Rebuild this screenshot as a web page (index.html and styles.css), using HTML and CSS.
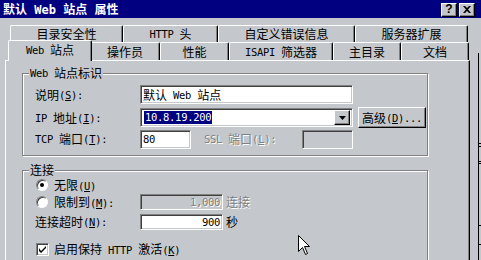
FILE: index.html
```html
<!DOCTYPE html>
<html lang="zh-CN">
<head>
  <meta charset="UTF-8" />
  <title>默认 Web 站点 属性</title>
  <link rel="stylesheet" href="styles.css">
</head>
<body>
  <div class="titlebar">
    <span class="title">默认<span class="en"> Web </span>站点<span class="en"> </span>属性</span>
    <div class="caption-btns">
      <span class="cbtn help">?</span>
      <span class="cbtn">
        <svg width="8" height="7" viewBox="0 0 8 7"><path d="M0 0h2l2 2 2-2h2L5 3.5 8 7H6L4 5 2 7H0l3-3.5z" fill="#000"/></svg>
      </span>
    </div>
  </div>

  <div class="client">
    <div class="main">
      <!-- back row of tabs -->
      <div class="tabrow back">
        <div class="tab" style="width:113px">目录安全性</div>
        <div class="tab" style="width:95px"><span class="en">HTTP </span>头</div>
        <div class="tab" style="width:137px">自定义错误信息</div>
        <div class="tab" style="width:113px">服务器扩展</div>
      </div>
      <!-- front row of tabs -->
      <div class="tabrow front">
        <div class="tab sel" style="width:84px"><span class="en">Web </span>站点</div>
        <div class="tab" style="width:70px">操作员</div>
        <div class="tab" style="width:69px">性能</div>
        <div class="tab" style="width:104px"><span class="en">ISAPI </span>筛选器</div>
        <div class="tab" style="width:68px">主目录</div>
        <div class="tab" style="width:68px">文档</div>
      </div>

      <div class="panel">
        <div class="group g1">
          <div class="group-title"><span class="en">Web </span>站点标识</div>

          <div class="row r1">
            <span class="lbl">说明<span class="en">(<u>S</u>):</span></span>
            <div class="edit wide">默认<span class="en"> Web </span>站点</div>
          </div>

          <div class="row r2">
            <span class="lbl"><span class="en">IP </span>地址<span class="en">(<u>I</u>):</span></span>
            <div class="combo">
              <div class="val"><span class="hl en">10.8.19.200</span></div>
              <div class="drop">
                <svg width="7" height="4" viewBox="0 0 7 4"><path d="M0 0h7L3.5 4z" fill="#000"/></svg>
              </div>
            </div>
            <div class="btn">高级<span class="en">(<u>D</u>)...</span></div>
          </div>

          <div class="row r3">
            <span class="lbl"><span class="en">TCP </span>端口<span class="en">(<u>T</u>):</span></span>
            <div class="edit short"><span class="en">80</span></div>
            <span class="lbl-ssl off"><span class="en">SSL </span>端口<span class="en">(<u>L</u>):</span></span>
            <div class="edit short dis"></div>
          </div>
        </div>

        <div class="group g2">
          <div class="group-title">连接</div>

          <div class="row c1">
            <span class="radio on"></span>
            <span>无限<span class="en">(<u>U</u>)</span></span>
          </div>

          <div class="row c2">
            <span class="lbl opt"><span class="radio"></span><span>限制到<span class="en">(<u>M</u>):</span></span></span>
            <div class="edit num dis"><span class="en off">1,000</span></div>
            <span class="after off">连接</span>
          </div>

          <div class="row c3">
            <span class="lbl">连接超时<span class="en">(<u>N</u>):</span></span>
            <div class="edit num"><span class="en">900</span></div>
            <span class="after">秒</span>
          </div>

          <div class="row c4">
            <span class="check">
              <svg width="7" height="7" viewBox="0 0 7 7"><path d="M0 2v3l2 2 5-5V0L2 5z" fill="#000"/></svg>
            </span>
            <span>启用保持<span class="en"> HTTP </span>激活<span class="en">(<u>K</u>)</span></span>
          </div>
        </div>
      </div>
    </div>

    <div class="edge">
      <span class="tick" style="margin-top:90px"></span>
      <span class="tick" style="margin-top:2px"></span>
      <span class="tick" style="margin-top:14px"></span>
      <span class="tick" style="margin-top:1px"></span>
      <span class="tick" style="margin-top:61px"></span>
      <span class="tick" style="margin-top:18px"></span>
    </div>
  </div>

  <svg class="cursor" width="13" height="21" viewBox="0 0 13 21">
    <path d="M0.5 0.5V16.5L4.5 12.5L7.5 19.5L9.5 18.5L6.5 11.5H11.5Z" fill="#fff" stroke="#000" stroke-width="1"/>
  </svg>
</body>
</html>
```

FILE: styles.css
```css
* {
  box-sizing: border-box;
}

body {
  margin: 0;
  width: 481px;
  height: 260px;
  overflow: hidden;
  position: relative;
  background: #c4c8cc;
  color: #000;
  font-family: "Noto Sans CJK SC", sans-serif;
  font-size: 12px;
  line-height: 14px;
}

.en {
  font-family: "DejaVu Sans Mono", monospace;
  font-size: 10.5px;
  letter-spacing: -0.3px;
  white-space: pre;
}

u {
  text-decoration: underline;
  text-underline-offset: 1px;
}

/* title bar */
.titlebar {
  height: 18px;
  background: #000080;
  color: #fff;
  display: flex;
  align-items: center;
  justify-content: space-between;
  padding: 0 6px 0 3px;
}

.title {
  font-weight: bold;
  font-size: 12px;
  line-height: 16px;
  white-space: nowrap;
}

.title .en {
  font-weight: bold;
  font-size: 12px;
  letter-spacing: 0;
}

.caption-btns {
  display: flex;
  gap: 2px;
  margin-top: 1px;
}

.cbtn {
  width: 16px;
  height: 14px;
  background: #c4c8cc;
  border: 1px solid;
  border-color: #fff #000 #000 #fff;
  box-shadow: inset -1px -1px #808080;
  display: flex;
  align-items: center;
  justify-content: center;
  color: #000;
}

.cbtn.help {
  font-family: "Liberation Sans", sans-serif;
  font-weight: bold;
  font-size: 12px;
  line-height: 11px;
}

/* client area */
.client {
  display: flex;
  height: 242px;
}

.main {
  width: 478px;
  padding-left: 5px;
}

.edge {
  width: 3px;
  height: 207px;
  margin-top: 35px;
  border-left: 1px solid #000;
  display: flex;
  flex-direction: column;
}

.tick {
  display: block;
  width: 2px;
  height: 1px;
  background: #000;
}

/* tabs */
.tabrow {
  display: flex;
  align-items: flex-start;
  margin-left: 5px;
}

.tabrow.back {
  margin-top: 7px;
  height: 17px;
}

.tabrow.front {
  height: 18px;
}

.tab {
  height: 100%;
  border-top: 1px solid #fff;
  border-left: 1px solid #fff;
  border-right: 1px solid #000;
  border-radius: 2px 2px 0 0;
  box-shadow: inset -1px 0 #808080;
  display: flex;
  align-items: center;
  justify-content: center;
  white-space: nowrap;
}

.tab.sel {
  height: 21px;
  margin: -2px -2px -1px -2px;
  padding-bottom: 2px;
  position: relative;
  z-index: 1;
  background: #c4c8cc;
}

/* tab page */
.panel {
  width: 465px;
  height: 200px;
  overflow: hidden;
  border-top: 1px solid #fff;
  border-left: 1px solid #fff;
  border-right: 1px solid #000;
  box-shadow: inset -1px 0 #808080;
  padding: 12px 0 0 16px;
}

.group {
  width: 406px;
  border: 1px solid #808080;
  box-shadow: inset 1px 1px #fff, 1px 1px #fff;
  display: flex;
  flex-direction: column;
  padding-left: 12px;
}

.g1 {
  height: 83px;
}

.g2 {
  height: 91px;
  margin-top: 14px;
}

.group-title {
  align-self: flex-start;
  height: 14px;
  margin: -8px 0 0 -6px;
  padding: 0 1px;
  background: #c4c8cc;
  display: flex;
  align-items: center;
  white-space: nowrap;
}

.row {
  display: flex;
  align-items: center;
  white-space: nowrap;
}

.r1 { height: 19px; margin-top: 5px; }
.r2 { height: 21px; margin-top: 3px; }
.r3 { height: 20px; margin-top: 1px; }

.c1 { height: 14px; margin-top: 1px; }
.c2 { height: 16px; margin-top: 2px; }
.c3 { height: 16px; margin-top: 4px; }
.c4 { height: 13px; margin-top: 13px; }

.lbl {
  width: 105px;
  display: flex;
  align-items: center;
}

.lbl.opt {
  margin-left: 1px;
  width: 104px;
}

.off {
  color: #808080;
  text-shadow: 1px 1px 0 #fff;
}

.lbl-ssl {
  width: 98px;
  margin-left: 13px;
  display: flex;
  align-items: center;
}

/* edit boxes */
.edit,
.combo {
  height: 100%;
  background: #fff;
  border: 1px solid;
  border-color: #808080 #fff #fff #808080;
  box-shadow: inset 1px 1px #404040, inset -1px -1px #c4c8cc;
  display: flex;
  align-items: center;
  padding: 0 1px 0 2px;
}

.r1 .edit,
.r3 .edit,
.combo {
  height: 19px;
}

.edit.wide {
  width: 213px;
}

.edit.short {
  width: 51px;
}

.edit.num {
  width: 83px;
  justify-content: flex-end;
  padding-right: 2px;
}

.edit.dis {
  background: #c4c8cc;
}

.after {
  margin-left: 3px;
}

.combo {
  width: 213px;
  padding: 2px;
}

.combo .val {
  flex: 1;
  display: flex;
  align-items: center;
  padding-left: 1px;
}

.hl {
  background: #000080;
  color: #fff;
  line-height: 13px;
  padding: 0 1px;
}

.drop {
  width: 16px;
  height: 15px;
  background: #c4c8cc;
  border: 1px solid;
  border-color: #fff #000 #000 #fff;
  box-shadow: inset -1px -1px #808080;
  display: flex;
  align-items: center;
  justify-content: center;
}

.btn {
  width: 68px;
  height: 21px;
  margin-left: 5px;
  border: 1px solid;
  border-color: #fff #000 #000 #fff;
  box-shadow: inset -1px -1px #808080;
  display: flex;
  align-items: center;
  justify-content: center;
}

/* radio and check boxes */
.radio {
  width: 12px;
  height: 12px;
  border-radius: 50%;
  background: #fff;
  border: 1px solid;
  border-color: #808080 #fff #fff #808080;
  box-shadow: inset 1px 1px #404040;
  display: flex;
  align-items: center;
  justify-content: center;
  margin-right: 6px;
  flex: none;
}

.c1 .radio {
  margin-left: 1px;
}

.radio.on::after {
  content: "";
  width: 4px;
  height: 4px;
  border-radius: 50%;
  background: #000;
}

.check {
  width: 13px;
  height: 13px;
  margin-left: 1px;
  margin-right: 5px;
  background: #fff;
  border: 1px solid;
  border-color: #808080 #fff #fff #808080;
  box-shadow: inset 1px 1px #404040, inset -1px -1px #c4c8cc;
  display: flex;
  align-items: center;
  justify-content: center;
}

.cursor {
  position: absolute;
  left: 298px;
  top: 235px;
}
```
